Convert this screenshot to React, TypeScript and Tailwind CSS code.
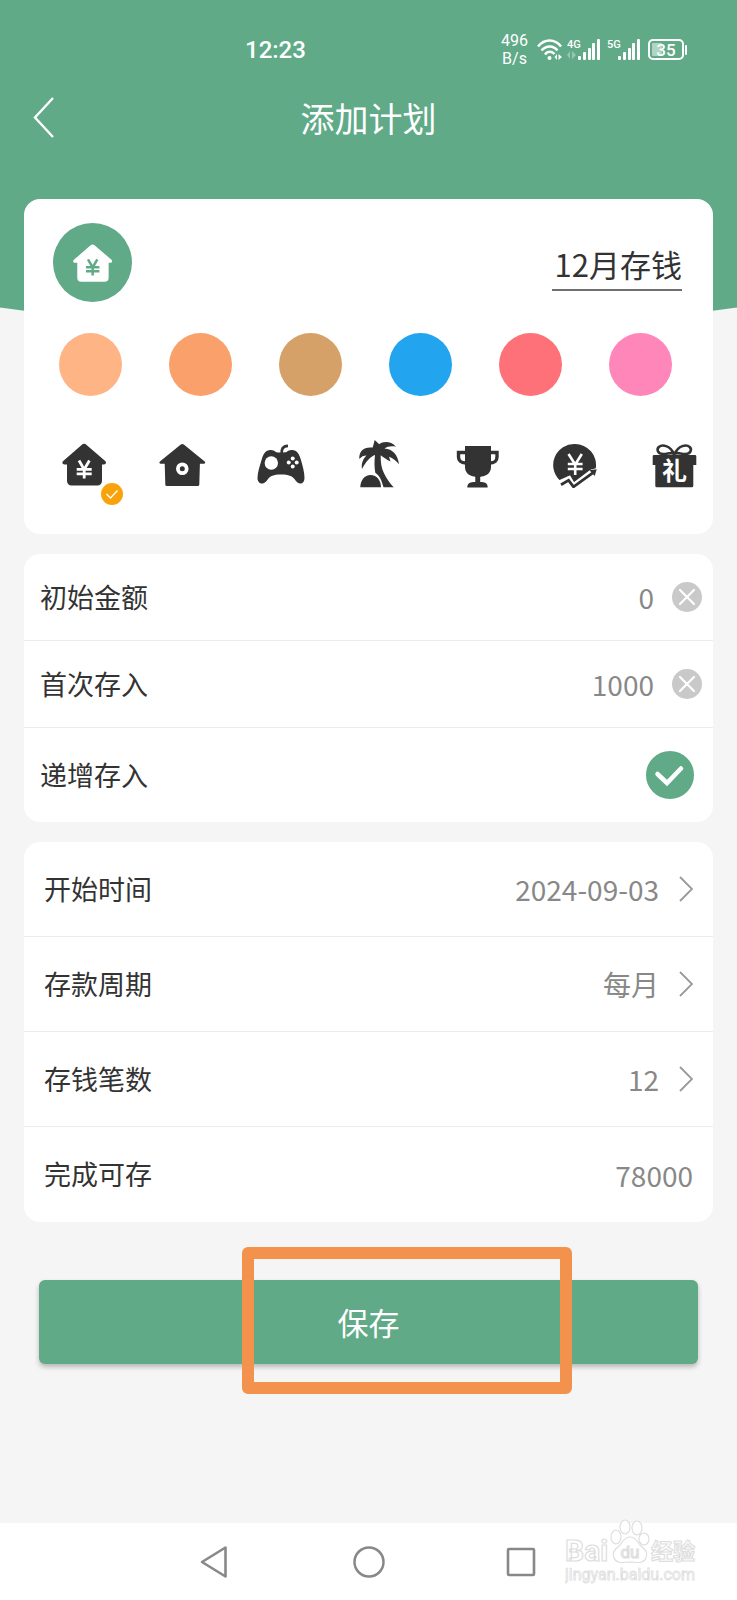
import { useState } from "react";
import type { ReactNode } from "react";

const swatches = [
  { name: "浅橙", color: "bg-[#feb485]" },
  { name: "橙色", color: "bg-[#f9a06b]" },
  { name: "棕色", color: "bg-[#d5a168]" },
  { name: "蓝色", color: "bg-[#23a4ef]" },
  { name: "红色", color: "bg-[#fe7178]" },
  { name: "粉色", color: "bg-[#fe86b9]" },
];

const Yen = ({ className }: { className?: string }) => (
  <path
    d="M19 20.500l5.200 9 5.200-9M24.200 29v9.500M16.700 29.300h15M16.700 33.800h15"
    fill="none"
    strokeWidth="2.8"
    className={className}
  />
);

const HouseShape = () => (
  <path d="M21.600 5a3.600 3.600 0 0 1 5 0L45.200 21c1.400 1.300.8 3.400-1.200 3.400h-2V41a4.500 4.500 0 0 1-4.500 4.500h-26A4.500 4.500 0 0 1 7 41V24.400H4.400c-2 0-2.600-2.100-1.200-3.400z" />
);

const planIcons: { name: string; art: ReactNode }[] = [
  {
    name: "房子基金",
    art: (
      <>
        <HouseShape />
        <Yen className="stroke-white" />
      </>
    ),
  },
  {
    name: "小屋",
    art: (
      <>
        <path d="M22.800 4.600a2.200 2.200 0 0 1 3 0L46.700 21.500c.9.9.5 2.300-.8 2.300h-4l-.6 20.700a1.500 1.500 0 0 1-1.500 1.500h-31a1.500 1.500 0 0 1-1.500-1.500l-.6-20.700h-4c-1.300 0-1.700-1.400-.8-2.300z" />
        <circle cx="24.3" cy="28.7" r="4.4" fill="none" stroke="#fff" strokeWidth="3.8" />
      </>
    ),
  },
  {
    name: "游戏",
    art: (
      <>
        <path d="M24.700 14c-.5-4.500 1-8 6.300-8.200" fill="none" stroke="#333" strokeWidth="2.8" />
        <path d="M12 10.300c3-.8 5 .3 6.500 1.500 1.200.8 2 .7 5.500.7s4.600 0 5.900-.7c1.600-1.200 3.600-2.300 6.600-1.500 3.300.7 5.500 3 7.300 9.200 2 7 3.700 13 3.700 18.500 0 3.500-1.600 5.500-4 5.500-2.600 0-4-1.700-6-4.500-2.600-3-5.500-4.500-13.500-4.500s-10.400 1.500-13 4.500c-2 2.800-3.500 4.500-6 4.500S.5 41.500.5 38c0-5.500 2.200-11.500 4.200-18.500 1.800-6.200 4-8.500 7.300-9.200z" />
        <circle cx="14.3" cy="23" r="6.7" fill="#fff" />
        <g fill="#fff">
          <circle cx="35.7" cy="18.4" r="2" />
          <circle cx="35.7" cy="26.4" r="2" />
          <circle cx="31.7" cy="22.4" r="2" />
          <circle cx="39.7" cy="22.4" r="2" />
        </g>
      </>
    ),
  },
  {
    name: "旅行",
    art: (
      <>
        <path d="M19.700 0l4.500 4.200C28 1.300 36 .8 41 6.800c-4-1-8.500-.5-11.500 1.700 8 .5 13.500 6.500 14.500 15.800-3-3.500-6-6-10-7.500l1.500 4.700c-4-2-7.500-4.500-9.800-6.300-.2 6.500.6 13 3.300 18 2.500 5 5.500 9.800 9.700 14.100H28.600C26.800 43 26.500 37 20.300 32.700c-1-5.500-1-11-.3-17.700C15 17 11 21.500 7 29c-.8-5 .5-9.500 4.500-13.500-3 0-5 1-7.200 3.500C3.800 11 9 6.500 17.700 7.600z" />
        <path d="M5.300 47.300C5.300 40.500 9.500 35 15.600 35S26 40.500 26 47.300z" />
      </>
    ),
  },
  {
    name: "奖杯",
    art: (
      <>
        <path d="M12 6h26v21c0 5.500-4 9-9.500 9.500l-1.300.5v5c4.600 0 7.500 1 7.500 5.400H14.300c0-4.400 3-5.400 8-5.400v-5l-1-.5C16 36 12 32.500 12 27z" />
        <path
          d="M12.500 12.500h-7v4.500c0 3.500 2.500 6 7 6M37.500 12.500h6.500v4.500c0 3.500-2.500 6-6.500 6"
          fill="none"
          stroke="#333"
          strokeWidth="3.4"
        />
      </>
    ),
  },
  {
    name: "理财",
    art: (
      <>
        <path d="M23 4a21 21 0 0 1 20.800 24.200L38 30 21.500 42.500 16.500 36 7.500 40A21 21 0 0 1 23 4z" />
        <path
          d="M16.500 14l6.700 10.500L29.800 14M23.200 24v11M15.800 24h14.800M15.800 29h14.800"
          fill="none"
          stroke="#fff"
          strokeWidth="2.6"
        />
        <path d="M9 44.500l8-5 4.500 7.500 20-15" fill="none" stroke="#fff" strokeWidth="6" />
        <path d="M9 44.800l7.600-4.500 4.900 6.500 20-14.500" fill="none" stroke="#333" strokeWidth="2.8" />
        <path d="M37.500 30.200l7.200-1-2 6.800z" />
      </>
    ),
  },
  {
    name: "礼物",
    art: (
      <>
        <path
          d="M24.300 14.500C20 5 12 4.200 8.800 7c-2.500 2.500-1 7 4.200 7M24.300 14.500C28.500 5 36.500 4.200 39.700 7c2.500 2.500 1 7-4.200 7M13 14c5 0 8-2 11.300-.2C27.500 12 30.500 14 35.500 14"
          fill="none"
          stroke="#333"
          strokeWidth="2.6"
        />
        <path d="M4 15h41a1.300 1.300 0 0 1 1.300 1.300V25h-3v20.800a1.500 1.500 0 0 1-1.500 1.500h-35a1.500 1.500 0 0 1-1.500-1.500V25H2.700v-8.700A1.300 1.300 0 0 1 4 15z" />
        <text x="24.5" y="40" textAnchor="middle" fill="#fff" className="text-[25px] font-bold">
          礼
        </text>
      </>
    ),
  },
];

const SignalBars = ({ label, busy }: { label: string; busy?: boolean }) => (
  <svg width="34" height="22" viewBox="0 0 34 22" fill="#fff" aria-hidden="true">
    <text x="0" y="9" className="text-[11px] font-medium">
      {label}
    </text>
    {busy && <path d="M3 12v8l-3-4zM5 12l4 4-4 4z" opacity=".35" />}
    <rect x="11" y="17" width="3" height="4" rx="1" />
    <rect x="16" y="13" width="3" height="8" rx="1" />
    <rect x="21" y="9" width="3" height="12" rx="1" />
    <rect x="25" y="4" width="3" height="17" rx="1" />
    <rect x="30" y="0" width="3" height="21" rx="1" />
  </svg>
);

const StatusBar = () => (
  <div className="flex h-[60px] items-center pt-10 pr-[49px] pl-[245px] font-[Roboto,sans-serif] font-medium text-white">
    <span className="text-2xl leading-6">12:23</span>
    <div className="ml-auto flex items-center">
      <div className="mr-[9px] text-center text-base leading-[18px] font-normal">
        <div>496</div>
        <div>B/s</div>
      </div>
      <svg width="30" height="22" viewBox="0 0 30 22" fill="none" stroke="#fff" strokeWidth="2.5" aria-hidden="true">
        <path d="M1 7.500C7.500-.5 18-.5 24 7.500M4.500 11.500c4.500-5.500 12-5.500 16 0M8 15.500c2.500-3.500 7-3.500 9.500-.5" />
        <circle cx="12.5" cy="19" r="2" fill="#fff" stroke="none" />
        <path d="M20 15v6l-2.500-3zM21.500 15l3.500 3-3.500 3z" fill="#fff" stroke="none" />
      </svg>
      <SignalBars label="4G" busy />
      <div className="w-[6px]" />
      <SignalBars label="5G" />
      <svg className="ml-[7px]" width="40" height="22" viewBox="0 0 40 22" aria-hidden="true">
        <rect x="1" y="1" width="34" height="19" rx="4" fill="none" stroke="#fff" strokeWidth="2" />
        <rect x="4" y="4" width="10" height="13" rx="1" fill="#fff" opacity=".5" />
        <rect x="37" y="6" width="2" height="10" rx="1" fill="#fff" />
        <text x="18" y="17" textAnchor="middle" fill="#fff" className="text-[17px]">
          35
        </text>
      </svg>
    </div>
  </div>
);

const ClearButton = ({ label, onClick }: { label: string; onClick: () => void }) => (
  <button type="button" aria-label={label} onClick={onClick} className="ml-[18px] shrink-0">
    <svg width="30" height="30" viewBox="0 0 30 30">
      <circle cx="15" cy="15" r="15" fill="#c9c9c9" />
      <path d="M8 8l14 14M22 8L8 22" stroke="#fff" strokeWidth="2.2" strokeLinecap="round" />
    </svg>
  </button>
);

type AmountRowProps = {
  id: string;
  label: string;
  value: string;
  onChange: (value: string) => void;
};

const AmountRow = ({ id, label, value, onChange }: AmountRowProps) => (
  <div className="flex h-[87px] items-center border-b border-[#ececec] pr-[11px] pl-4">
    <label htmlFor={id} className="shrink-0 text-[27px]">
      {label}
    </label>
    <input
      id={id}
      type="text"
      inputMode="numeric"
      value={value}
      onChange={(e) => onChange(e.target.value)}
      className="min-w-0 flex-1 bg-transparent text-right text-[28px] text-[#888] outline-none"
    />
    <ClearButton label={`清除${label}`} onClick={() => onChange("")} />
  </div>
);

const PickerRow = ({ label, value }: { label: string; value: string }) => (
  <button
    type="button"
    className="flex h-[95px] w-full items-center border-b border-[#ececec] px-5 text-left"
  >
    <span className="text-[27px]">{label}</span>
    <span className="ml-auto text-[28px] text-[#888]">{value}</span>
    <svg className="ml-5" width="14" height="26" viewBox="0 0 14 26" fill="none" aria-hidden="true">
      <path d="M1 1l12 12L1 25" stroke="#999" strokeWidth="1.8" />
    </svg>
  </button>
);

const Watermark = () => (
  <svg
    className="absolute right-[38px] bottom-[13px] font-[Roboto,'Noto_Sans_CJK_SC',sans-serif]"
    width="134"
    height="68"
    viewBox="0 0 134 68"
    fill="#fff"
    stroke="#dedede"
    strokeWidth="1.2"
    aria-hidden="true"
  >
    <text x="0" y="42" className="text-[30px] font-bold">
      Bai
    </text>
    <ellipse cx="51" cy="18" rx="5" ry="7" />
    <ellipse cx="60" cy="8" rx="5" ry="7" />
    <ellipse cx="72" cy="9" rx="5" ry="7" />
    <ellipse cx="79" cy="20" rx="5" ry="6" />
    <path d="M65 18c6 0 7 5 11 9 5 4 7 7 5 12-2 5-6 5-16 4-10 1-14 1-16-4-2-5 0-8 5-12 4-4 5-9 11-9z" />
    <text x="65" y="39" textAnchor="middle" className="text-[17px]">
      du
    </text>
    <text x="86" y="40" className="text-[22px] font-bold">
      经验
    </text>
    <text x="0" y="61" strokeWidth=".8" className="text-[16px]">
      jingyan.baidu.com
    </text>
  </svg>
);

const App = () => {
  const [planName, setPlanName] = useState("12月存钱");
  const [initialAmount, setInitialAmount] = useState("0");
  const [firstDeposit, setFirstDeposit] = useState("1000");
  const [increasing, setIncreasing] = useState(true);
  const [selectedIcon, setSelectedIcon] = useState(0);

  return (
    <div className="relative flex min-h-screen flex-col bg-[#f5f5f5] font-['Noto_Sans_CJK_SC',sans-serif] text-[#333]">
      <header className="h-[333px] bg-[#60aa88] [clip-path:ellipse(130%_100%_at_50%_0)]">
        <StatusBar />
        <div className="mt-8 grid h-[52px] grid-cols-[1fr_auto_1fr] items-center px-8 text-white">
          <button type="button" aria-label="返回" className="justify-self-start">
            <svg width="24" height="42" viewBox="0 0 24 42" fill="none">
              <path d="M21 1L3 20.500 21 40" stroke="#fff" strokeWidth="2.4" />
            </svg>
          </button>
          <h1 className="text-[34px] leading-[50px]">添加计划</h1>
        </div>
      </header>

      <main className="relative mt-[-134px] flex flex-1 flex-col gap-5 px-6">
        <section className="h-[335px] rounded-2xl bg-white pt-6">
          <div className="flex items-center justify-between pr-[31px] pl-[29px]">
            <div className="flex size-[79px] items-center justify-center rounded-full bg-[#60aa88]">
              <svg width="43" height="43" viewBox="0 0 48 48" fill="#fff" aria-hidden="true">
                <HouseShape />
                <Yen className="stroke-[#60aa88]" />
              </svg>
            </div>
            <input
              type="text"
              aria-label="计划名称"
              value={planName}
              onChange={(e) => setPlanName(e.target.value)}
              className="mt-[3px] h-[53px] w-[130px] border-b-2 border-[#707070] bg-transparent text-right text-[31px] outline-none"
            />
          </div>

          <div className="mt-[31px] flex justify-between pr-[41px] pl-[35px]">
            {swatches.map((swatch) => (
              <button
                key={swatch.name}
                type="button"
                aria-label={swatch.name}
                className={`size-[63px] rounded-full ${swatch.color}`}
              />
            ))}
          </div>

          <div className="mt-11 flex justify-between pr-[15px] pl-9">
            {planIcons.map((icon, index) => (
              <button
                key={icon.name}
                type="button"
                aria-label={icon.name}
                aria-pressed={index === selectedIcon}
                onClick={() => setSelectedIcon(index)}
                className="relative"
              >
                <svg width="48" height="48" viewBox="0 0 48 48" fill="#333">
                  {icon.art}
                </svg>
                {index === selectedIcon && (
                  <svg className="absolute top-[43px] left-[41px]" width="22" height="22" viewBox="0 0 22 22" fill="none">
                    <circle cx="11" cy="11" r="11" fill="#f8a30b" />
                    <path d="M5.500 11l4 4 7-7.500" stroke="#fff" strokeWidth="1.3" />
                  </svg>
                )}
              </button>
            ))}
          </div>
        </section>

        <section className="rounded-2xl bg-white">
          <AmountRow id="initial" label="初始金额" value={initialAmount} onChange={setInitialAmount} />
          <AmountRow id="first" label="首次存入" value={firstDeposit} onChange={setFirstDeposit} />
          <div className="flex h-[94px] items-center justify-between pr-[19px] pl-4">
            <label htmlFor="increasing" className="text-[27px]">
              递增存入
            </label>
            <div className="grid size-12 place-items-center">
              <input
                id="increasing"
                type="checkbox"
                checked={increasing}
                onChange={(e) => setIncreasing(e.target.checked)}
                className="col-start-1 row-start-1 size-12 appearance-none rounded-full border-2 border-[#c9c9c9] checked:border-[#60aa88] checked:bg-[#60aa88]"
              />
              <svg
                className="pointer-events-none col-start-1 row-start-1"
                width="48"
                height="48"
                viewBox="0 0 48 48"
                fill="none"
                aria-hidden="true"
              >
                <path d="M11.500 23l9.500 9 14-14.500" stroke="#fff" strokeWidth="4.5" strokeLinecap="round" />
              </svg>
            </div>
          </div>
        </section>

        <section className="rounded-2xl bg-white">
          <PickerRow label="开始时间" value="2024-09-03" />
          <PickerRow label="存款周期" value="每月" />
          <PickerRow label="存钱笔数" value="12" />
          <div className="flex h-[95px] items-center justify-between px-5">
            <span className="text-[27px]">完成可存</span>
            <span className="text-[28px] text-[#888]">78000</span>
          </div>
        </section>

        <div className="relative mx-[15px] mt-[38px]">
          <button
            type="button"
            className="h-[84px] w-full rounded-md bg-[#60aa88] text-[31px] text-white shadow-[0_3px_5px_rgba(0,0,0,0.25)]"
          >
            保存
          </button>
          <div className="pointer-events-none absolute top-[-33px] left-[203px] h-[147px] w-[330px] rounded-md border-12 border-[#f2924c]" />
        </div>
      </main>

      <nav className="relative grid h-[77px] grid-cols-[1fr_auto_1fr] items-center bg-white">
        <button type="button" aria-label="后退" className="mr-[124px] justify-self-end">
          <svg width="28" height="34" viewBox="0 0 28 34" fill="none">
            <path d="M25.500 2.500v29L2 17z" stroke="#888" strokeWidth="2.6" strokeLinejoin="round" />
          </svg>
        </button>
        <button type="button" aria-label="主页">
          <svg width="34" height="34" viewBox="0 0 34 34" fill="none">
            <circle cx="17" cy="17" r="14.5" stroke="#888" strokeWidth="2.5" />
          </svg>
        </button>
        <button type="button" aria-label="最近任务" className="ml-[120px] justify-self-start">
          <svg width="30" height="30" viewBox="0 0 30 30" fill="none">
            <rect x="2" y="2" width="26" height="26" rx="1" stroke="#888" strokeWidth="2.6" />
          </svg>
        </button>
        <Watermark />
      </nav>
    </div>
  );
};

export default App;
